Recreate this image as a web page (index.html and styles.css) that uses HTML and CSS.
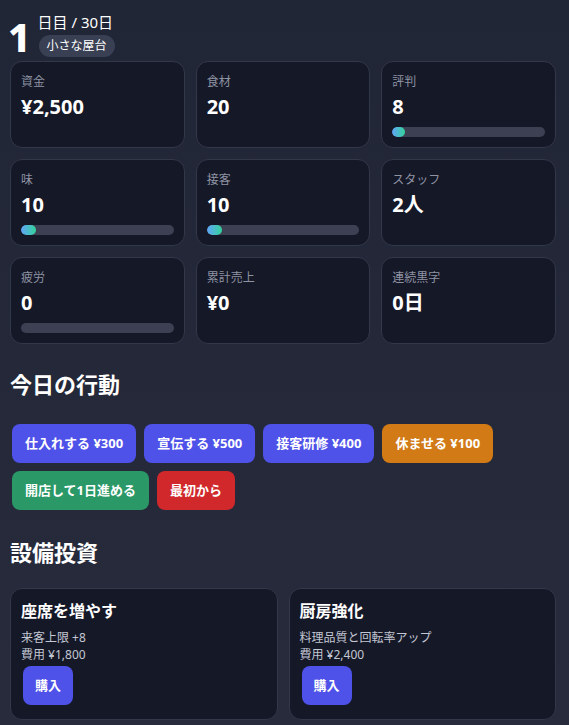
FILE: index.html
```html
<!DOCTYPE html>
<html lang="ja">
<head>
    <meta charset="UTF-8">
    <meta name="viewport" content="width=device-width, initial-scale=1.0">
    <title>屋台経営</title>
    <link rel="stylesheet" href="styles.css">
</head>
<body>

<div class="app">
    <header class="top">
        <div class="day">1</div>
        <div class="day-info">
            <div class="day-total">日目 / 30日</div>
            <span class="badge">小さな屋台</span>
        </div>
    </header>

    <div class="stats">
        <div class="stat">
            <div class="label">資金</div>
            <div class="value">¥2,500</div>
        </div>
        <div class="stat">
            <div class="label">食材</div>
            <div class="value">20</div>
        </div>
        <div class="stat">
            <div class="label">評判</div>
            <div class="value">8</div>
            <div class="bar"><div class="fill" style="width: 8%"></div></div>
        </div>
        <div class="stat">
            <div class="label">味</div>
            <div class="value">10</div>
            <div class="bar"><div class="fill" style="width: 10%"></div></div>
        </div>
        <div class="stat">
            <div class="label">接客</div>
            <div class="value">10</div>
            <div class="bar"><div class="fill" style="width: 10%"></div></div>
        </div>
        <div class="stat">
            <div class="label">スタッフ</div>
            <div class="value">2人</div>
        </div>
        <div class="stat">
            <div class="label">疲労</div>
            <div class="value">0</div>
            <div class="bar"><div class="fill" style="width: 0%"></div></div>
        </div>
        <div class="stat">
            <div class="label">累計売上</div>
            <div class="value">¥0</div>
        </div>
        <div class="stat">
            <div class="label">連続黒字</div>
            <div class="value">0日</div>
        </div>
    </div>

    <h2>今日の行動</h2>
    <div class="actions">
        <button class="btn">仕入れする ¥300</button>
        <button class="btn">宣伝する ¥500</button>
        <button class="btn">接客研修 ¥400</button>
        <button class="btn btn-rest">休ませる ¥100</button>
        <button class="btn btn-open">開店して1日進める</button>
        <button class="btn btn-reset">最初から</button>
    </div>

    <h2 class="invest-title">設備投資</h2>
    <div class="upgrades">
        <div class="upgrade">
            <h3>座席を増やす</h3>
            <div class="desc">来客上限 +8</div>
            <div class="desc">費用 ¥1,800</div>
            <button class="btn">購入</button>
        </div>
        <div class="upgrade">
            <h3>厨房強化</h3>
            <div class="desc">料理品質と回転率アップ</div>
            <div class="desc">費用 ¥2,400</div>
            <button class="btn">購入</button>
        </div>
    </div>
</div>

</body>
</html>
```

FILE: styles.css
```css
body {
    margin: 0;
    font-family: "Noto Sans", "Noto Sans CJK JP", sans-serif;
    color: #fff;
    background: linear-gradient(#212636, #272b3c);
    min-height: 100vh;
}
.app {
    padding: 10px 13px 10px 10px;
}
.top {
    display: flex;
    align-items: center;
    gap: 7px;
    height: 51px;
}
.day {
    margin-left: -2px;
    font-size: 39px;
    font-weight: 800;
    line-height: 40px;
    margin-top: 2px;
}
.day-info {
    display: flex;
    flex-direction: column;
    align-items: flex-start;
    gap: 3px;
    margin-top: -2px;
}
.day-total {
    font-size: 15px;
    line-height: 20px;
}
.badge {
    display: inline-block;
    margin-left: 1px;
    background-color: #3a4054;
    border-radius: 11px;
    font-size: 12px;
    line-height: 22px;
    padding: 0 8px;
}
.stats {
    display: grid;
    grid-template-columns: repeat(3, 1fr);
    gap: 11px;
}
.stat, .upgrade {
    background-color: #151827;
    border: 1px solid #33374a;
    border-radius: 12px;
    padding: 11px 10px 10px;
}
.label {
    font-size: 12px;
    line-height: 18px;
    color: #8e93a3;
}
.value {
    margin-top: 2px;
    font-size: 20px;
    font-weight: 700;
    line-height: 28px;
}
.bar {
    margin-top: 6px;
    height: 10px;
    background-color: #3d4053;
    border-radius: 5px;
    overflow: hidden;
}
.fill {
    height: 100%;
    background: linear-gradient(90deg, #60a5fa, #34d399);
    border-radius: 5px;
}
h2 {
    margin: 25px 0 23px;
    font-size: 22px;
    line-height: 30px;
    font-weight: 700;
}
.invest-title {
    margin: 25px 0 21px;
}
.actions {
    display: flex;
    flex-wrap: wrap;
    gap: 4px;
}
.btn {
    margin: 2px;
    padding: 10px 13px;
    font-family: inherit;
    font-size: 13px;
    font-weight: 700;
    line-height: 19px;
    color: #fff;
    background-color: #4f52e8;
    border: none;
    border-radius: 8px;
    cursor: pointer;
}
.btn-rest {
    background-color: #d17a16;
}
.btn-open {
    background-color: #2a9867;
}
.btn-reset {
    background-color: #d0282b;
}
.upgrades {
    display: grid;
    grid-template-columns: 1fr 1fr;
    gap: 11px;
}
.upgrade {
    padding: 10px 10px 12px;
}
h3 {
    margin: 0 0 6px;
    font-size: 16px;
    line-height: 24px;
    font-weight: 700;
}
.desc {
    font-size: 12px;
    line-height: 17px;
    color: #c3c7d3;
}
.upgrade .btn {
    margin-top: 3px;
    padding: 10px 12px;
}
```
